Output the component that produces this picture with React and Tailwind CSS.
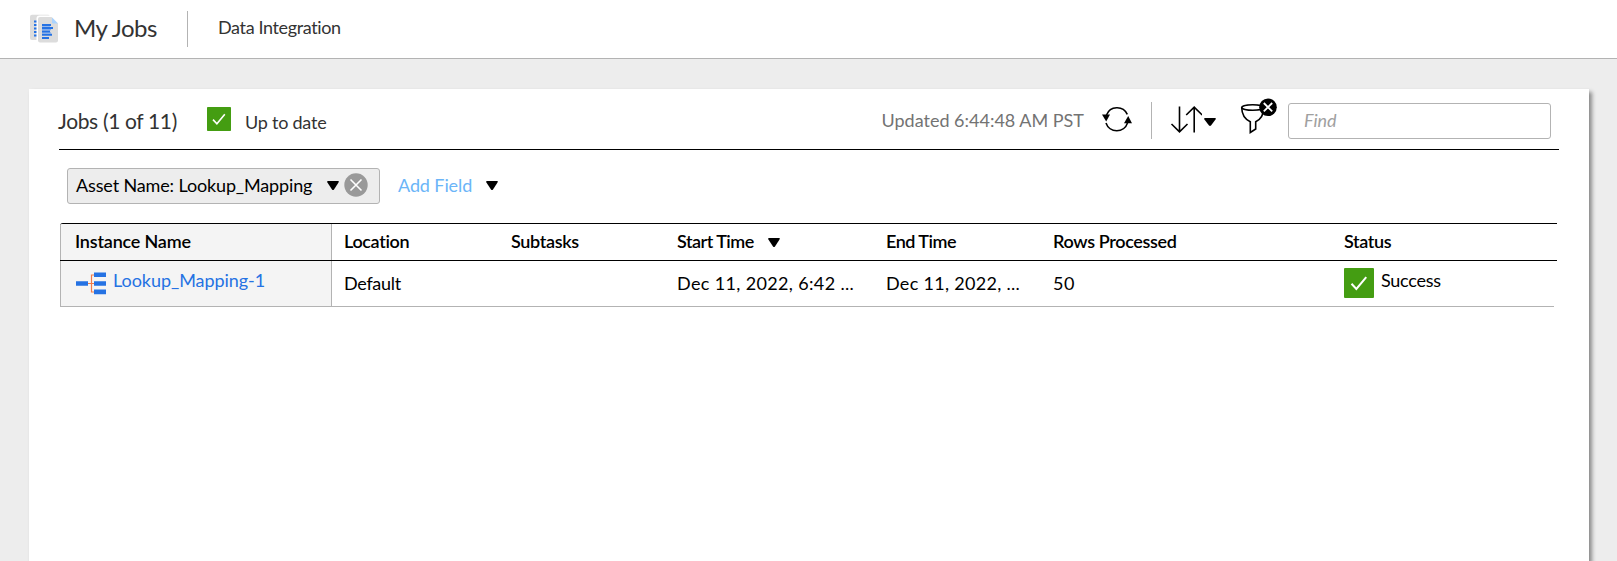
const Caret = ({ className }) => (
  <svg viewBox="0 0 12 9" preserveAspectRatio="none" className={className}>
    <path d="M.8 0h10.400q1.100.3.3 1.600L7 8.400q-1 1.100-2 0L.4 1.600Q-.2.4.8 0Z" fill="currentColor" />
  </svg>
);

const JobsIcon = () => (
  <svg viewBox="0 0 29 29" className="mt-[14px] h-[29px] w-[29px]">
    <path d="M2 .8H18.500L21 3V26H2Q0 26 0 24V2.800Q0 .8 2 .8Z" fill="#dcdcdc" />
    <path d="M4 7.500h3M4 11h3M4 14.500h3M4 18h3M4 21.500h3" stroke="#2572e3" strokeWidth="2" />
    <path d="M9.500 1.500H22L29 8.500V29H9.500Q6.500 29 6.500 26V4.500Q6.500 1.500 9.500 1.500Z" fill="#fff" />
    <path d="M10 3H21.500L28 9.500V26.500Q28 28.500 26 28.500H10Q8 28.500 8 26.500V5Q8 3 10 3Z" fill="#dcdcdc" />
    <path d="M22 3.500 28 9.500H23.200Q22 9.500 22 8.300Z" fill="#a9d3ff" />
    <path d="M12 12.200h8M12 15.700h9M12 18.800h9" stroke="#7eabef" strokeWidth="1.200" />
    <path d="M12 11h9M12 14h11M12 17.500h8M12 20.700h10M12 24h7" stroke="#2572e3" strokeWidth="1.900" />
  </svg>
);

const CheckBadge = ({ className }) => (
  <svg viewBox="0 0 24 24" className={className}>
    <rect width="24" height="24" rx="0.8" fill="#449d12" />
    <path d="m6 12.600 3.900 4.200L17.800 7.300" fill="none" stroke="#fff" strokeWidth="1.600" />
  </svg>
);

const RefreshIcon = () => (
  <svg viewBox="0 0 30 26" className="mt-[17px] ml-[18px] h-[26px] w-[30px]" fill="none" stroke="#000" strokeWidth="1.600">
    <path d="M4.500 9A11.300 11.300 0 0 1 25.300 8.300" />
    <path d="M25.500 17A11.300 11.300 0 0 1 4 17" />
    <path d="M0 8.500h8l-3.800 7z" fill="#000" stroke="none" />
    <path d="M22 17.300h8l-3.800-7.300z" fill="#000" stroke="none" />
  </svg>
);

const SortIcon = () => (
  <svg viewBox="0 0 32 27" className="mt-[17px] ml-[18px] h-[27px] w-[32px]" fill="none" stroke="#000" strokeWidth="1.600">
    <path d="M9.500 0.500V25.500M1.500 18l8 7.800 8-7.800" />
    <path d="M24.200 26.500V1.500M16.200 9l8-7.800 8 7.800" />
  </svg>
);

const FilterIcon = () => (
  <svg viewBox="0 0 37 38" className="mt-[8px] ml-[24px] h-[38px] w-[37px]" fill="none" stroke="#000" strokeWidth="1.600">
    <ellipse cx="12.700" cy="10.500" rx="11" ry="2.800" />
    <path d="M1.700 10.500C1.800 17 4.500 22 10.300 24.800V35.500L15.700 32V24.800C21.500 22 23.700 17 23.800 10.500" />
    <circle cx="28" cy="10.300" r="8.800" fill="#000" stroke="none" />
    <path d="m23.800 6 8.400 8.400m0-8.400-8.400 8.400" stroke="#fff" strokeWidth="1.800" />
  </svg>
);

const MappingIcon = () => (
  <svg viewBox="0 0 30 24" className="mt-[10px] ml-[15px] h-[24px] w-[30px]">
    <path d="M12 12.500h7M19 4h-3.500v17H19" fill="none" stroke="#f27a47" strokeWidth="1.200" />
    <path d="M0 10.200h12v4.600H0zM18 1.500h12v4.600H18zM18 10.200h12v4.600H18zM18 18.600h12v4.600H18z" fill="#2572e3" />
  </svg>
);

export default function App() {
  return (
    <div className="flex h-[561px] w-[1617px] flex-col overflow-hidden bg-[#ededed] font-['Lato',sans-serif] text-[18px] leading-6 whitespace-nowrap text-black">
      <header className="flex h-[59px] shrink-0 items-start border-b border-[#b3b3b3] bg-white pl-[30px] text-[#333]">
        <JobsIcon />
        <h1 className="mt-[10px] ml-[15px] w-[113px] text-[24px] leading-9 tracking-[-0.5px]">My Jobs</h1>
        <div className="mt-[11px] h-[36px] w-px bg-[#b3b3b3]" />
        <span className="mt-[15px] ml-[30px] tracking-[-0.37px]">Data Integration</span>
      </header>

      <main className="mt-[30px] ml-[29px] flex h-[500px] w-[1560px] flex-col bg-white shadow-[3px_3px_4px_rgba(0,0,0,0.42)]">
        <div className="ml-[30px] flex h-[61px] w-[1500px] items-start border-b border-black text-[#333]">
          <h2 className="mt-[16px] ml-[-1px] w-[149px] text-[21px] leading-8 tracking-[-0.35px]">Jobs (1 of 11)</h2>
          <CheckBadge className="mt-[18px] h-[24px] w-[24px]" />
          <span className="mt-[21px] ml-[14px] tracking-[-0.23px]">Up to date</span>
          <div className="ml-auto flex items-start">
            <span className="mt-[19px] text-[#737373]">Updated 6:44:48 AM PST</span>
            <RefreshIcon />
            <div className="mt-[13px] ml-[19px] h-[37px] w-px bg-[#b3b3b3]" />
            <SortIcon />
            <Caret className="mt-[29px] ml-[2px] h-[8px] w-[12px] text-black" />
            <FilterIcon />
            <div className="mt-[14px] mr-[8px] ml-[11px] h-[36px] w-[263px] rounded-[3px] border border-[#b3b3b3] pt-[4px] pl-[15px] text-[#a0a0a0] italic">Find</div>
          </div>
        </div>

        <div className="mt-[18px] ml-[38px] flex h-[36px] items-start">
          <div className="flex h-[36px] w-[313px] items-start rounded-[3px] border border-[#b3b3b3] bg-[#ededed] pl-[8px]">
            <span className="mt-[4px] w-[251px] tracking-[-0.14px]">Asset Name: Lookup_Mapping</span>
            <Caret className="mt-[12px] h-[9px] w-[12px]" />
            <svg viewBox="0 0 24 24" className="mt-[4px] ml-[5px] h-[24px] w-[24px]">
              <circle cx="12" cy="12" r="11.700" fill="#999" />
              <path d="m6.500 6.500 11 11m0-11-11 11" stroke="#fff" strokeWidth="1.600" />
            </svg>
          </div>
          <span className="mt-[5px] ml-[18px] w-[88px] tracking-[-0.1px] text-[#6bb5f8]">Add Field</span>
          <Caret className="mt-[13px] h-[9px] w-[12px]" />
        </div>

        <div className="mt-[19px] ml-[31px] w-[1497px]">
          <div className="grid h-[38px] grid-cols-[272px_167px_166px_209px_167px_291px_1fr] overflow-hidden rounded-tl-[3px] border-y border-black leading-[34px] font-semibold tracking-[-0.35px]">
            <div className="border-x border-[#b3b3b3] bg-[#f4f4f4] pl-[14px] tracking-[-0.2px]">Instance Name</div>
            <div className="pl-[12px]">Location</div>
            <div className="pl-[12px]">Subtasks</div>
            <div className="flex pl-[12px]">
              <span className="w-[91px] tracking-[-0.5px]">Start Time</span>
              <Caret className="mt-[14px] h-[9px] w-[12px]" />
            </div>
            <div className="pl-[12px] tracking-[-0.5px]">End Time</div>
            <div className="pl-[12px]">Rows Processed</div>
            <div className="pl-[12px]">Status</div>
          </div>
          <div className="grid h-[46px] w-[1494px] grid-cols-[272px_167px_166px_209px_167px_291px_1fr] border-b border-[#b3b3b3] leading-[44px]">
            <div className="flex border-x border-[#b3b3b3] bg-[#f4f4f4]">
              <MappingIcon />
              <a className="ml-[7px] leading-[38px] tracking-[-0.05px] text-[#2572e3]">Lookup_Mapping-1</a>
            </div>
            <div className="pl-[12px] tracking-[-0.3px]">Default</div>
            <div />
            <div className="pl-[12px] tracking-[0.35px]">Dec 11, 2022, 6:42 ...</div>
            <div className="pl-[12px] tracking-[0.3px]">Dec 11, 2022, ...</div>
            <div className="pl-[12px] tracking-[0.5px]">50</div>
            <div className="flex pl-[12px]">
              <CheckBadge className="mt-[7px] h-[30px] w-[30px]" />
              <span className="ml-[7px] leading-[39px] tracking-[-0.25px]">Success</span>
            </div>
          </div>
        </div>
      </main>
    </div>
  );
}
